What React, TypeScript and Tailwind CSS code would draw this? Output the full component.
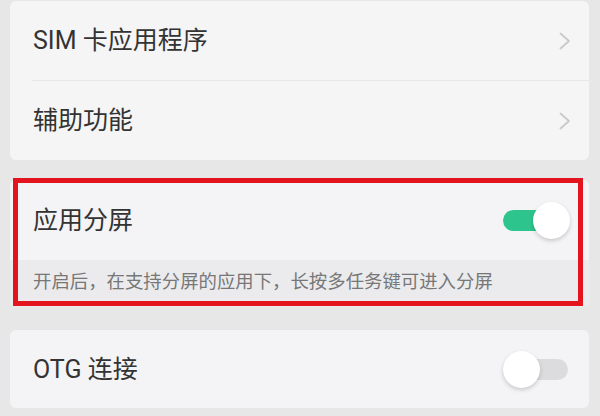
import React from "react";

const font = { fontFamily: '"Roboto", "Noto Sans CJK SC", sans-serif' };

function Chevron() {
  return (
    <svg width="12" height="18" viewBox="0 0 12 18" fill="none">
      <path d="M1.5 1.5 L10 9 L1.5 16.5" stroke="#c9c9c9" strokeWidth="1.8" strokeLinecap="round" strokeLinejoin="round" />
    </svg>
  );
}

function Toggle({ on }: { on: boolean }) {
  return (
    <div className="relative w-[67px] h-[37px] flex items-center">
      <div className={`absolute left-0 right-[2px] h-[21px] rounded-full ${on ? "bg-[#2ec48e]" : "bg-[#dcdcdf]"}`} />
      <div
        className={`absolute top-0 w-[37px] h-[37px] rounded-full bg-white shadow-[0_2px_4px_rgba(0,0,0,0.18)] ${on ? "right-0" : "left-0"}`}
      />
    </div>
  );
}

export default function App() {
  return (
    <div className="w-[600px] h-[416px] bg-[#e7e7e8] pl-[10px] pr-[11px] pt-[1px] overflow-hidden" style={font}>
      <div className="h-[159px] bg-[#f5f5f5] rounded-[6px] flex flex-col">
        <div className="h-[79px] flex items-center justify-between pl-[23px] pr-[18px]">
          <span className="text-[25px] text-[#333333] leading-none">SIM 卡应用程序</span>
          <Chevron />
        </div>
        <div className="ml-[22px] h-px bg-[#e7e7e7]" />
        <div className="flex-1 flex items-center justify-between pl-[23px] pr-[18px]">
          <span className="text-[25px] text-[#333333] leading-none">辅助功能</span>
          <Chevron />
        </div>
      </div>

      <div className="relative mt-[20px] h-[127px] bg-[#f4f4f6] rounded-[6px] flex flex-col overflow-visible">
        <div className="h-[80px] flex items-center justify-between pl-[23px] pr-[19px]">
          <span className="text-[25px] text-[#333333] leading-none">应用分屏</span>
          <Toggle on={true} />
        </div>
        <div className="flex-1 bg-[#ebebed] rounded-b-[6px] flex items-center pl-[23px] pb-[2px]">
          <span className="text-[18.4px] text-[#777777] leading-none">开启后，在支持分屏的应用下，长按多任务键可进入分屏</span>
        </div>
        <div className="absolute left-[3px] top-[-2px] w-[570px] h-[128px] border-[5px] border-[#e3141e] pointer-events-none" />
      </div>

      <div className="mt-[23px] h-[78px] bg-[#f4f4f6] rounded-[6px] flex items-center justify-between pl-[23px] pr-[19px]">
        <span className="text-[25px] text-[#333333] leading-none">OTG 连接</span>
        <Toggle on={false} />
      </div>
    </div>
  );
}
